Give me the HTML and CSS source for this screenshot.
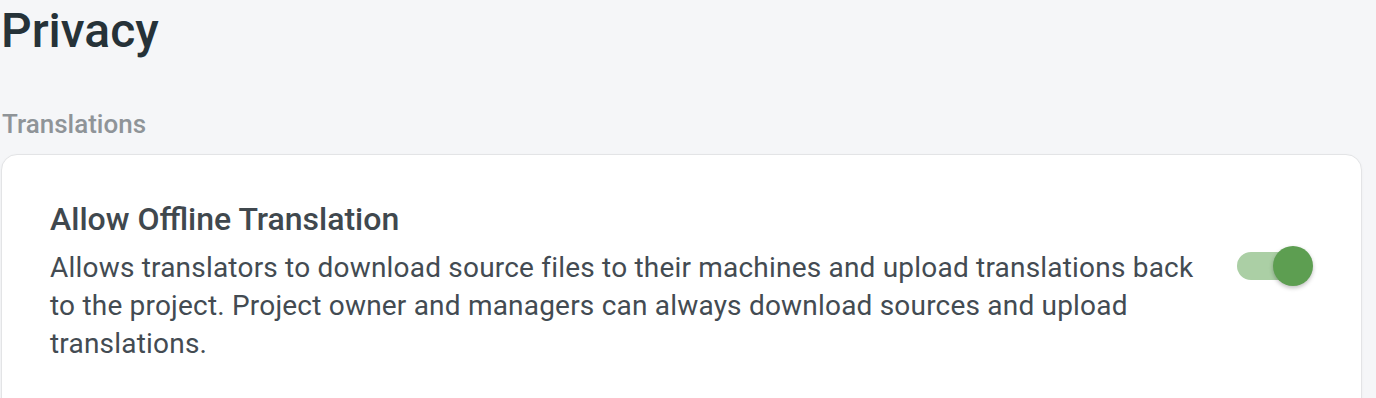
FILE: index.html
```html
<!DOCTYPE html>
<html lang="en">
<head>
    <meta charset="UTF-8">
    <meta name="viewport" content="width=device-width, initial-scale=1.0">
    <title>Privacy</title>
    <link rel="stylesheet" href="styles.css">
</head>
<body>
    <h1 class="page-title">Privacy</h1>
    <div class="section-label">Translations</div>
    <div class="card">
        <div class="setting">
            <div class="setting-text">
                <div class="setting-title">Allow Offline Translation</div>
                <div class="setting-desc">Allows translators to download source files to their machines and upload translations back to the project. Project owner and managers can always download sources and upload translations.</div>
            </div>
            <div class="toggle on">
                <span class="track"></span>
                <span class="knob"></span>
            </div>
        </div>
    </div>
</body>
</html>
```

FILE: styles.css
```css
body {
    font-family: Roboto, "Noto Sans", sans-serif;
    margin: 0;
    padding: 0 14px 0 1px;
    background-color: #f5f6f8;
    color: #3d464d;
}
.page-title {
    font-size: 48px;
    line-height: 56px;
    font-weight: 500;
    color: #263238;
    margin: 3px 0 0 0;
}
.section-label {
    font-size: 26px;
    line-height: 32px;
    font-weight: 500;
    color: #8f9498;
    margin-top: 49px;
    padding-left: 1px;
}
.card {
    margin-top: 14px;
    background: #ffffff;
    border: 1px solid #e3e4e6;
    border-radius: 16px;
    padding: 44px 48px 60px 48px;
    box-shadow: 0 1px 3px rgba(0, 0, 0, 0.04);
}
.setting {
    display: flex;
    align-items: flex-start;
    gap: 24px;
}
.setting-text {
    flex: 1;
}
.setting-title {
    font-size: 32px;
    line-height: 40px;
    font-weight: 500;
    color: #40484e;
}
.setting-desc {
    margin-top: 10px;
    font-size: 28px;
    line-height: 38px;
    letter-spacing: 0.2px;
    color: #434b52;
}
.toggle {
    position: relative;
    width: 76px;
    height: 40px;
    margin-top: 47px;
}
.toggle .track {
    position: absolute;
    left: 0;
    top: 6px;
    width: 60px;
    height: 28px;
    border-radius: 14px;
    background: #abcfa5;
}
.toggle .knob {
    position: absolute;
    right: 0;
    top: 0;
    width: 40px;
    height: 40px;
    border-radius: 50%;
    background: #5d9e51;
    box-shadow: 0 2px 4px rgba(0, 0, 0, 0.25);
}
```
